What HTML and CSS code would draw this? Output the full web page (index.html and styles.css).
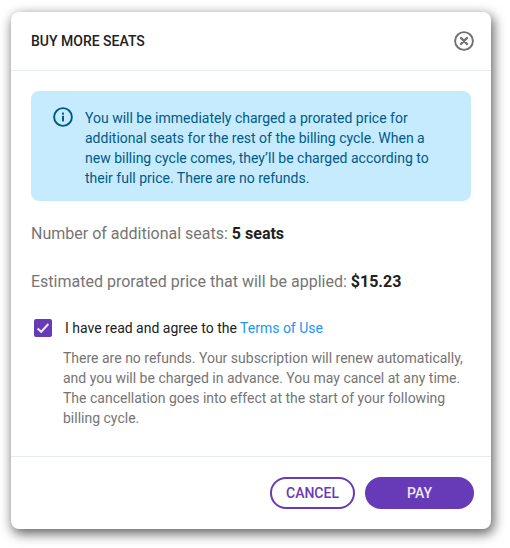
FILE: index.html
```html
<!DOCTYPE html>
<html lang="en">
<head>
<meta charset="utf-8">
<title>Buy more seats</title>
<link rel="stylesheet" href="styles.css">
</head>
<body>
<div class="modal">
  <header class="modal-header">
    <h2 class="modal-title">BUY MORE SEATS</h2>
    <svg class="close-icon" viewBox="0 0 20 20" width="20" height="20" aria-label="Close">
      <circle cx="10" cy="10" r="8.9" fill="none" stroke="#707070" stroke-width="1.9"/>
      <path d="M7 7l6 6M13 7l-6 6" fill="none" stroke="#707070" stroke-width="2.4" stroke-linecap="round"/>
    </svg>
  </header>
  <div class="modal-body">
    <div class="alert">
      <svg class="info-icon" viewBox="0 0 20 20" width="20" height="20">
        <circle cx="10" cy="10" r="8.9" fill="none" stroke="#005a87" stroke-width="1.9"/>
        <rect x="9" y="8.8" width="2" height="5.6" fill="#005a87"/>
        <rect x="9" y="5.6" width="2" height="2" fill="#005a87"/>
      </svg>
      <p class="alert-text">You will be immediately charged a prorated price for additional seats for the rest of the billing cycle. When a new billing cycle comes, they’ll be charged according to their full price. There are no refunds.</p>
    </div>
    <p class="summary seats">Number of additional seats: <strong>5 seats</strong></p>
    <p class="summary price">Estimated prorated price that will be applied: <strong>$15.23</strong></p>
    <div class="agree">
      <span class="checkbox">
        <svg viewBox="0 0 18 18" width="18" height="18"><path d="M3.6 9.4l3.6 3.4L14.4 5" fill="none" stroke="#ede7f6" stroke-width="2"/></svg>
      </span>
      <span class="agree-label">I have read and agree to the <a class="terms" href="#">Terms of Use</a></span>
    </div>
    <p class="terms-note">There are no refunds. Your subscription will renew automatically, and you will be charged in advance. You may cancel at any time. The cancellation goes into effect at the start of your following billing cycle.</p>
  </div>
  <footer class="modal-footer">
    <button class="btn btn-outline" type="button">CANCEL</button>
    <button class="btn btn-solid" type="button">PAY</button>
  </footer>
</div>
</body>
</html>
```

FILE: styles.css
```css
* { box-sizing: border-box; }
html, body { height: 100%; overflow: hidden; }
body {
  margin: 0;
  padding: 12px 19px 0 11px;
  background: #fff;
  font-family: Roboto, "Liberation Sans", sans-serif;
}
.modal {
  width: 480px;
  height: 517px;
  background: #fff;
  border-radius: 8px;
  box-shadow: 2px 4px 12px 1px rgba(0, 0, 0, .6);
  display: flex;
  flex-direction: column;
}
.modal-header {
  height: 59px;
  padding: 0 17px 0 20px;
  border-bottom: 1px solid #e6ecef;
  display: flex;
  align-items: center;
  justify-content: space-between;
  flex: none;
}
.modal-title {
  margin: 0;
  font-size: 14px;
  font-weight: 500;
  color: #212121;
}
.modal-body {
  flex: 1;
  padding: 20px 20px 0;
}
.alert {
  height: 110px;
  padding: 17px 22px 0;
  background: #c6ebfe;
  border-radius: 8px;
  display: flex;
  gap: 12px;
}
.info-icon { flex: none; margin-top: -1px; }
.alert-text {
  margin: 0;
  font-size: 14px;
  line-height: 20px;
  color: #005a87;
}
.summary {
  margin: 0;
  font-size: 16px;
  line-height: 24px;
  color: #757575;
}
.summary strong { color: #212121; font-weight: 700; }
.seats { margin-top: 21px; }
.price { margin-top: 24px; }
.agree {
  margin-top: 24px;
  margin-left: 3px;
  display: flex;
  align-items: center;
  gap: 13px;
  height: 20px;
}
.checkbox {
  width: 18px;
  height: 18px;
  background: #673ab7;
  border-radius: 2px;
  flex: none;
  display: flex;
}
.agree-label {
  font-size: 14px;
  line-height: 20px;
  color: #212121;
}
.terms { color: #2196f3; text-decoration: none; }
.terms-note {
  margin: 10px 0 0 32px;
  font-size: 14px;
  line-height: 20px;
  color: #757575;
}
.modal-footer {
  height: 73px;
  flex: none;
  padding: 20px 17px 0 0;
  border-top: 1px solid #e6ecef;
  display: flex;
  justify-content: flex-end;
  gap: 10px;
}
.btn {
  height: 32px;
  border-radius: 16px;
  font-family: inherit;
  font-size: 14px;
  font-weight: 500;
  padding: 0;
}
.btn-outline {
  width: 85px;
  background: #fff;
  color: #673ab7;
  border: 2px solid #673ab7;
}
.btn-solid {
  width: 109px;
  background: #673ab7;
  color: #ede7f6;
  border: none;
}
```
